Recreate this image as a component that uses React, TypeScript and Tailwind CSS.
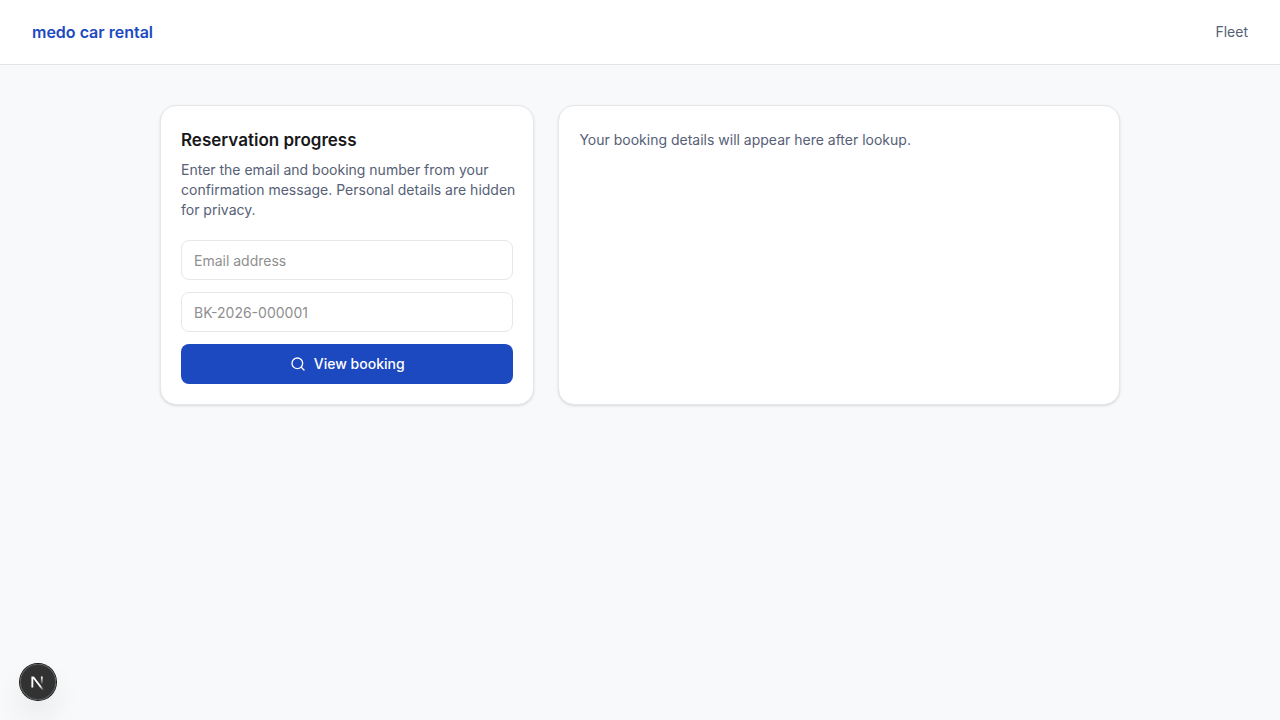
import { useState } from "react";
import type { FormEvent } from "react";
import { Search } from "lucide-react";

function NextLogo() {
  return (
    <svg width="40" height="40" viewBox="0 0 40 40" fill="none" className="shrink-0" aria-hidden>
      <g transform="translate(12, 13)">
        <path
          d="M13.3 15.2 L2.34 1 V12.6"
          stroke="url(#next_diagonal)"
          strokeWidth="1.86"
          mask="url(#next_mask)"
        />
        <path d="M11.825 1.5 V13.1" stroke="url(#next_stem)" strokeWidth="1.86" />
      </g>
      <defs>
        <linearGradient
          id="next_diagonal"
          x1="9.95555"
          y1="11.1226"
          x2="15.4778"
          y2="17.9671"
          gradientUnits="userSpaceOnUse"
        >
          <stop stopColor="white" />
          <stop offset="0.604072" stopColor="white" stopOpacity="0" />
          <stop offset="1" stopColor="white" stopOpacity="0" />
        </linearGradient>
        <linearGradient
          id="next_stem"
          x1="11.8222"
          y1="1.40039"
          x2="11.791"
          y2="9.62542"
          gradientUnits="userSpaceOnUse"
        >
          <stop stopColor="white" />
          <stop offset="1" stopColor="white" stopOpacity="0" />
        </linearGradient>
        <mask id="next_mask">
          <rect width="100%" height="100%" fill="white" />
          <rect width="5" height="1.5" fill="black" />
        </mask>
      </defs>
    </svg>
  );
}

const cardClass = "min-w-0 rounded-2xl border border-[#e5e7eb] bg-white p-5 shadow-sm";

const inputClass =
  "h-10 w-full rounded-lg border border-[#e5e7eb] bg-white px-3 text-sm text-[#18181b] outline-none placeholder:text-[#8f8f8f] focus:border-[#1c48c0]";

export default function App() {
  const [email, setEmail] = useState("");
  const [bookingNumber, setBookingNumber] = useState("");

  const handleSubmit = (e: FormEvent) => {
    e.preventDefault();
  };

  return (
    <div className="min-h-screen bg-[#f7f9fb] font-['Inter',sans-serif] text-[#18181b] antialiased">
      <header className="flex h-[65px] items-center justify-between border-b border-[#e2e5ea] bg-white px-8">
        <a href="#" className="text-base font-semibold text-[#1d4abf]">
          medo car rental
        </a>
        <nav>
          <a href="#fleet" className="block text-sm text-[#566076]">
            Fleet
          </a>
        </nav>
      </header>

      <main className="mx-auto grid w-full max-w-5xl gap-6 px-8 py-10 md:grid-cols-[2fr_3fr]">
        <section className={cardClass}>
          <h1 className="text-[17px] leading-7 font-semibold">Reservation progress</h1>
          <p className="mt-1.5 text-sm text-[#566076] lg:whitespace-nowrap">
            Enter the email and booking number from your <br className="hidden lg:block" />
            confirmation message. Personal details are hidden <br className="hidden lg:block" />
            for privacy.
          </p>
          <form onSubmit={handleSubmit} className="mt-5 grid gap-3">
            <input
              type="email"
              aria-label="Email address"
              placeholder="Email address"
              value={email}
              onChange={(e) => setEmail(e.target.value)}
              className={inputClass}
            />
            <input
              type="text"
              aria-label="Booking number"
              placeholder="BK-2026-000001"
              value={bookingNumber}
              onChange={(e) => setBookingNumber(e.target.value)}
              className={inputClass}
            />
            <button
              type="submit"
              className="flex h-10 w-full items-center justify-center gap-2 rounded-lg bg-[#1c48c0] text-sm font-medium text-white"
            >
              <Search className="size-4" />
              View booking
            </button>
          </form>
        </section>

        <section className={cardClass}>
          <p className="py-1 text-sm text-[#566076]">
            Your booking details will appear here after lookup.
          </p>
        </section>
      </main>

      <button
        type="button"
        aria-label="Open dev tools"
        className="fixed bottom-5 left-5 flex size-9 items-center justify-center rounded-full bg-black/80 shadow-[0_0_0_1px_#171717,inset_0_0_0_1px_rgba(255,255,255,0.14),0_16px_32px_-8px_rgba(0,0,0,0.24)]"
      >
        <NextLogo />
      </button>
    </div>
  );
}
